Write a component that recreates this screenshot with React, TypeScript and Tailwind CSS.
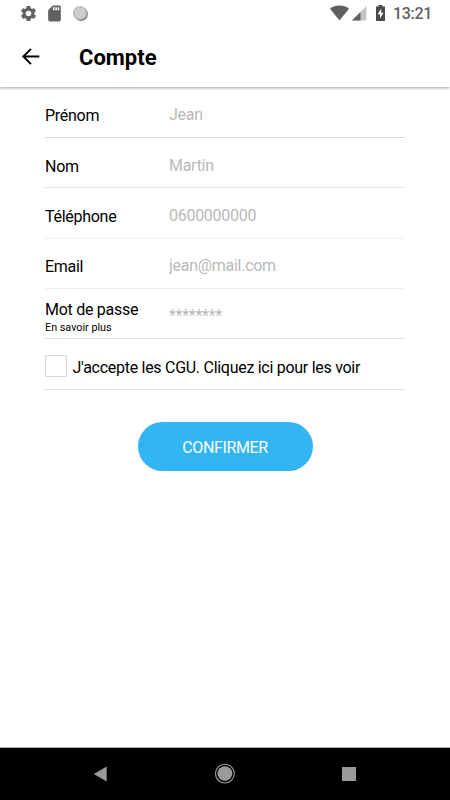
import React from 'react';
import { MdSettings, MdSdCard } from 'react-icons/md';

interface FieldProps {
  label: string;
  placeholder: string;
  type?: string;
  hint?: string;
  className: string;
}

const Field: React.FC<FieldProps> = ({ label, placeholder, type = 'text', hint, className }) => (
  <div className={`flex items-center border-b ${className}`}>
    <div className="w-[124px] shrink-0 text-black pt-0.5">
      <div className="text-[16px] leading-[19px] tracking-[-0.28px]">{label}</div>
      {hint && <div className="text-[10.8px] leading-[13px] mt-0.5">{hint}</div>}
    </div>
    <input
      type={type}
      placeholder={placeholder}
      className="flex-1 min-w-0 h-6 text-[16px] leading-[19px] tracking-[-0.28px] bg-transparent outline-none placeholder:text-[#b9b9b9] placeholder:opacity-100"
    />
  </div>
);

const StatusBar = () => (
  <div className="h-7 shrink-0 flex items-center justify-between pl-[19px] pr-[17px] text-[#616161]">
    <div className="flex items-center -mt-0.5">
      <MdSettings className="w-[19px] h-[19px]" />
      <MdSdCard className="w-[19px] h-[19px] ml-[7px]" />
      <svg className="w-4 h-4 ml-2" viewBox="0 0 16 16">
        <circle cx="9" cy="9" r="6.9" fill="#777" />
        <circle cx="8" cy="8" r="7.1" fill="#cdcdcd" />
        <circle cx="8" cy="8" r="6.2" fill="none" stroke="#8f8f8f" strokeWidth="1" strokeDasharray="1 1.2" />
      </svg>
    </div>
    <div className="flex items-center">
      <svg className="w-[19px] h-4 -mt-0.5" viewBox="0 0 19 16" fill="currentColor">
        <path d="M9.5 15.5 0 3.8C2.5 1.7 5.8.6 9.5.6s7 1.1 9.5 3.2z" />
      </svg>
      <svg className="w-[15px] h-4 ml-[3px] -mt-0.5" viewBox="0 0 15 16">
        <path d="M0 15.5 14.4 1v14.5z" fill="#c4c4c4" />
        <path d="M0 15.5 8.5 7v8.5z" fill="currentColor" />
      </svg>
      <svg className="w-[9px] h-4 ml-[9px] -mt-0.5 text-[#4a4a4a]" viewBox="0 0 9 16">
        <path d="M2.6 0h3.8v1.6H9V16H0V1.6h2.6z" fill="currentColor" />
        <path d="M5.2 3.6 1.7 9.3h2.2v4.2l3.5-5.8H5.2z" fill="#fff" />
      </svg>
      <span className="ml-2 w-10 text-[16px] leading-7 tracking-[-0.3px] font-medium text-[#616161]">13:21</span>
    </div>
  </div>
);

const NavBar = () => (
  <div className="h-[53px] shrink-0 bg-black border-t border-[#aaa] flex items-center justify-between pl-[93px] pr-[94px]">
    <svg className="w-[14px] h-4" viewBox="0 0 14 16">
      <path d="M13.7 0.5v15L.7 8z" fill="#9a9a9a" />
    </svg>
    <svg className="w-5 h-[22px]" viewBox="0 0 20 22">
      <circle cx="9.9" cy="10.6" r="9.4" fill="none" stroke="#9a9a9a" strokeWidth="1.1" />
      <circle cx="9.9" cy="10.6" r="7.4" fill="#9a9a9a" />
    </svg>
    <div className="w-[14px] h-[14px] bg-[#9a9a9a]" />
  </div>
);

export default function App() {
  return (
    <div className="w-[450px] h-[800px] bg-white flex flex-col overflow-hidden font-[Roboto,sans-serif]">
      <StatusBar />
      <header className="h-[59px] shrink-0 flex items-center pl-[21px] bg-white shadow-[0_1px_3px_rgba(0,0,0,0.36)] [clip-path:inset(0_0_-6px_0)]">
        <svg className="w-[19px] h-[18px] mb-1" viewBox="0 0 19 18" fill="none" stroke="#000" strokeWidth="1.9">
          <path d="M18.3 9.5H2.4M10 1.8 2.3 9.5l7.7 7.7" />
        </svg>
        <h1 className="ml-[39px] pt-px text-[22px] leading-7 font-bold text-black">Compte</h1>
      </header>

      <main className="flex-1 flex flex-col px-[45px] pt-px">
        <Field label="Prénom" placeholder="Jean" className="h-[50px] pt-1 border-[#d9d9d9]" />
        <Field label="Nom" placeholder="Martin" className="h-[50px] pt-[5px] border-[#e2e2e4]" />
        <Field label="Téléphone" placeholder="0600000000" className="h-[51px] pt-1 border-[#efefef]" />
        <Field label="Email" placeholder="jean@mail.com" className="h-[50px] pt-1 border-[#efefef]" />
        <Field label="Mot de passe" placeholder="********" hint="En savoir plus" className="h-[50px] pt-1 border-[#dfe2e8]" />
        <div className="h-[51px] flex items-center pt-1 border-b border-[#e2e2e4]">
          <div className="w-[22px] h-[22px] border border-[#d3d7de]" />
          <span className="ml-[5.5px] pt-0.5 text-[16px] leading-[19px] tracking-[-0.28px] text-black">J'accepte les CGU. Cliquez ici pour les voir</span>
        </div>
        <button className="mt-8 w-[175px] h-[49px] pt-0.5 self-center rounded-full bg-[#33b5f3] text-white text-[16px] leading-[19px] tracking-[-0.35px]">
          CONFIRMER
        </button>
      </main>

      <NavBar />
    </div>
  );
}
